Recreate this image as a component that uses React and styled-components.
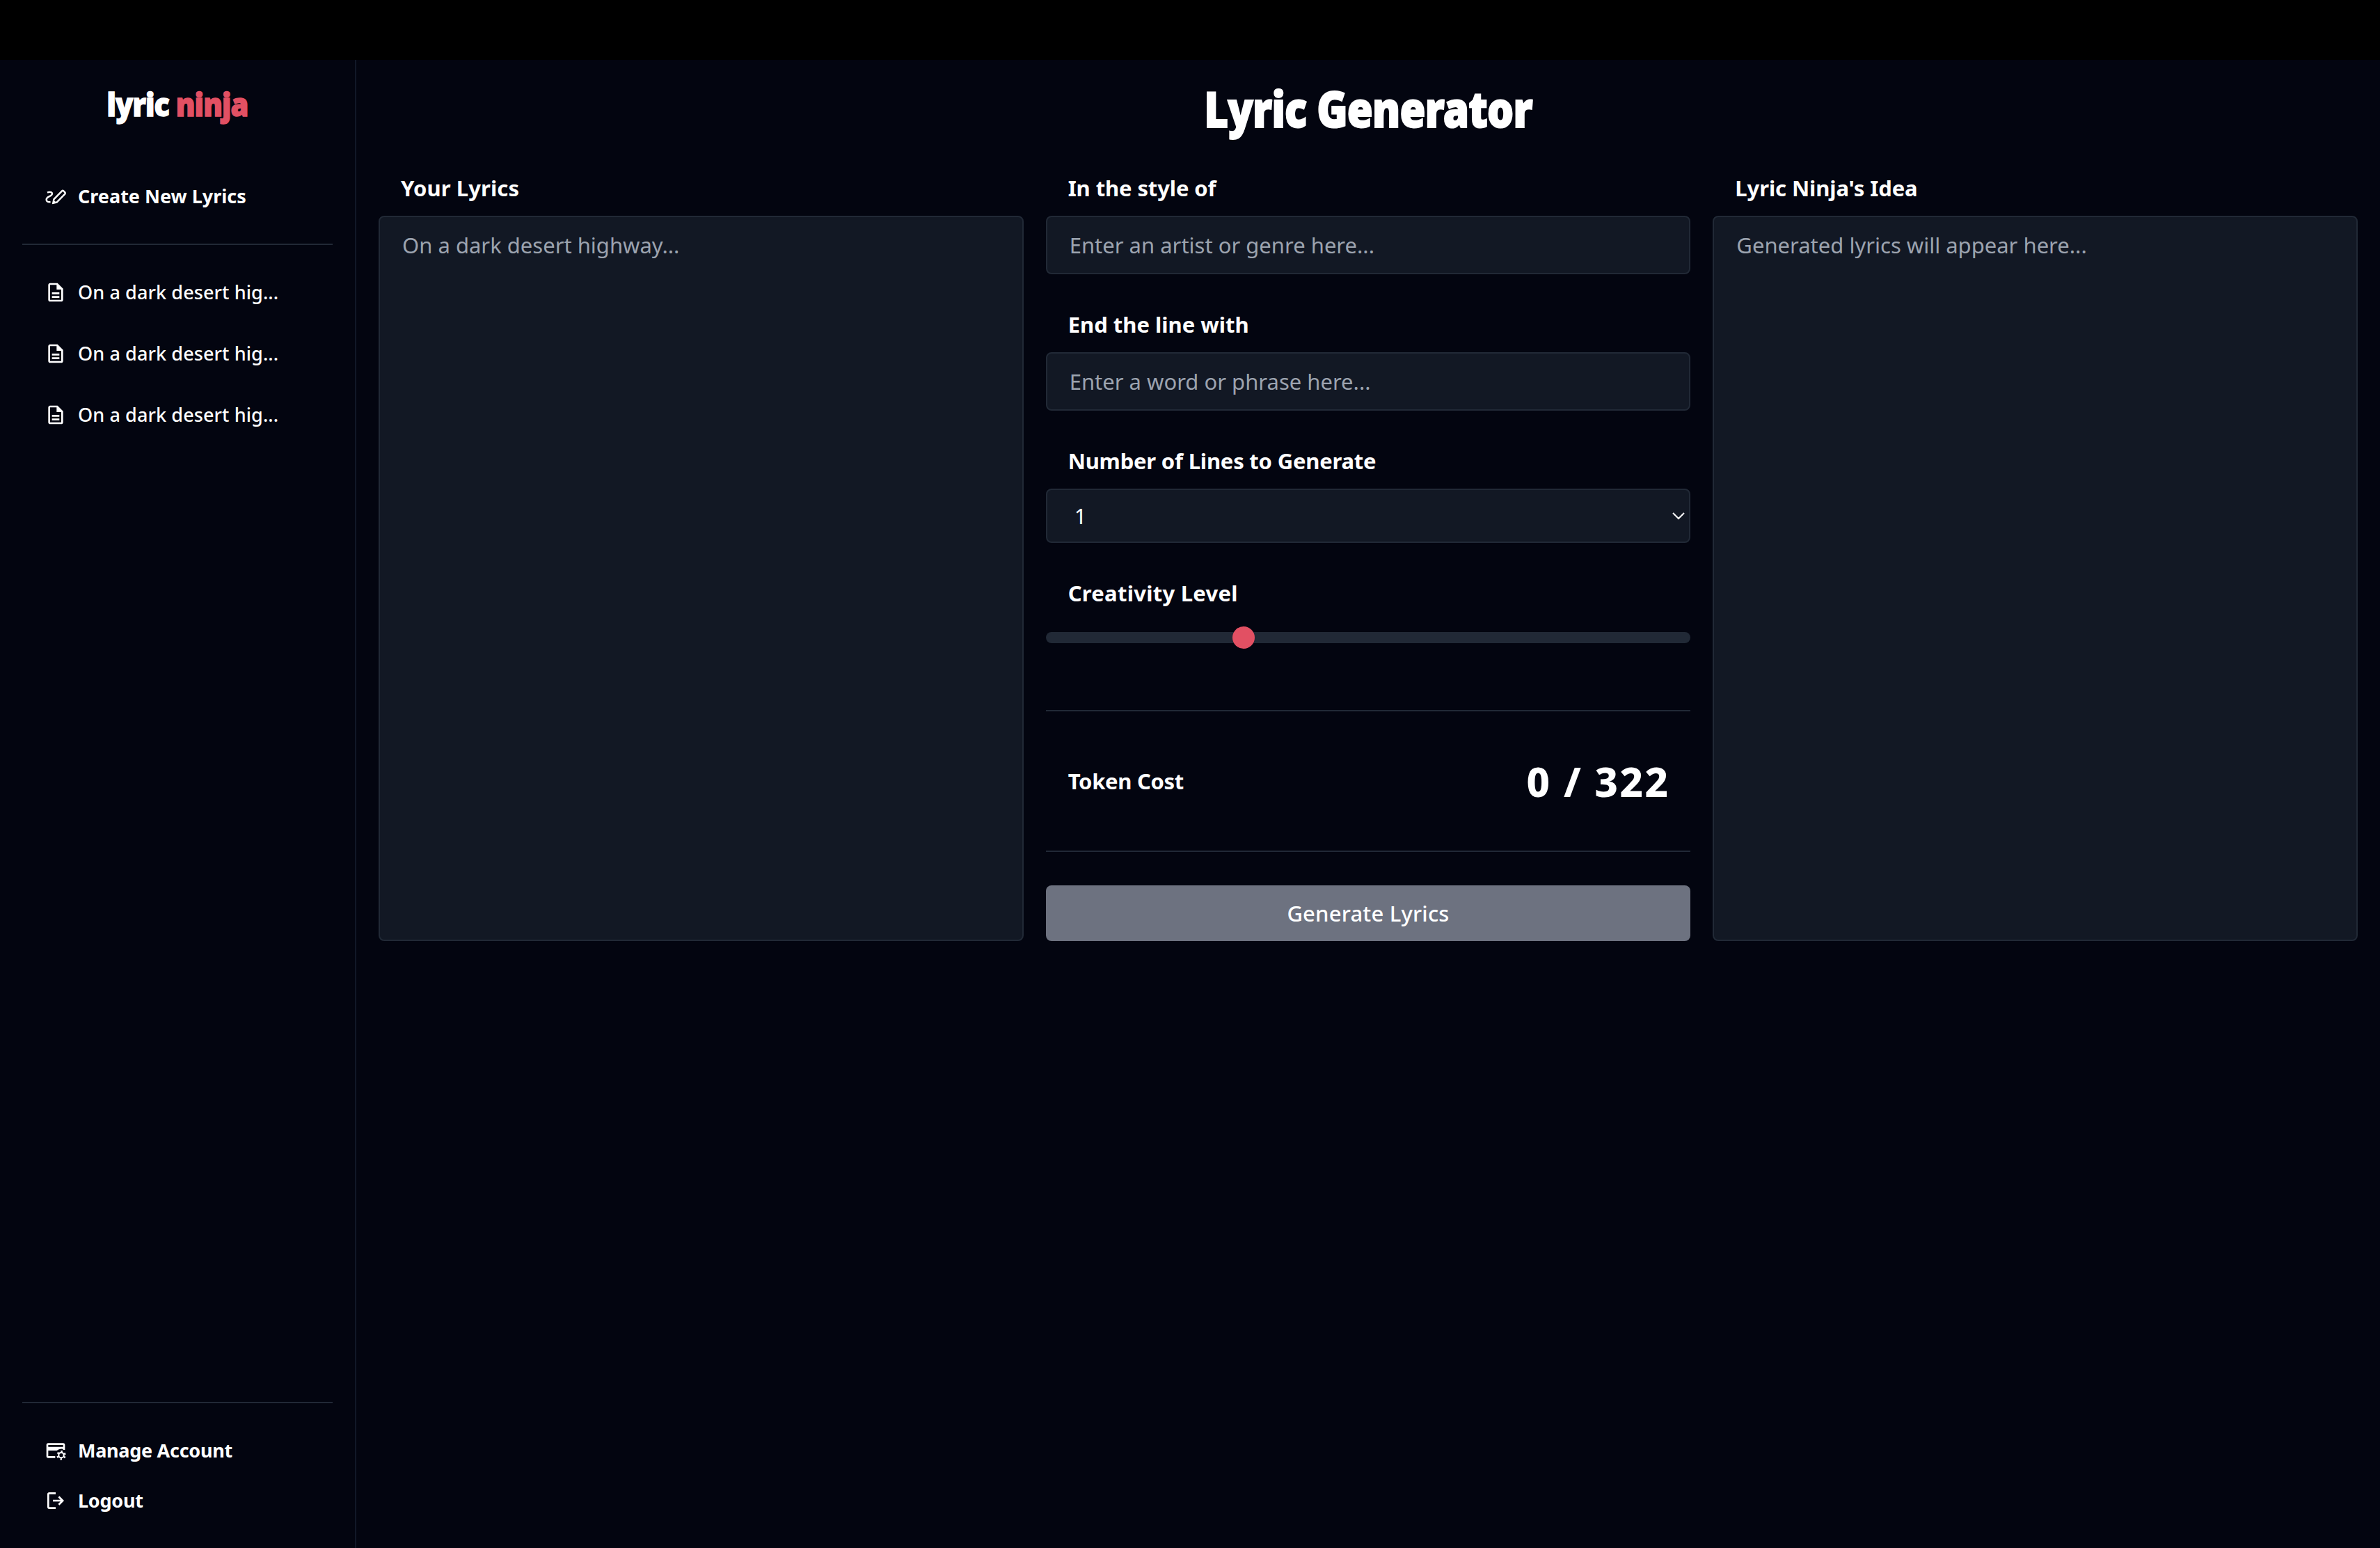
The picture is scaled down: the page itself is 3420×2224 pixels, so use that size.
import React from "react";
import styled, { createGlobalStyle } from "styled-components";
import { MdOutlineDescription } from "react-icons/md";

const GlobalStyle = createGlobalStyle`
  * {
    box-sizing: border-box;
  }
  body {
    margin: 0;
    background: #030510;
    color: #ffffff;
    font-family: "Noto Sans", "Open Sans", sans-serif;
  }
`;

const Page = styled.div`
  display: flex;
  flex-direction: column;
  width: 100vw;
  height: 100vh;
  overflow: hidden;
`;

const TopStrip = styled.div`
  flex: none;
  height: 86px;
  background: #000000;
`;

const Layout = styled.div`
  flex: 1;
  display: flex;
  min-height: 0;
`;

const Sidebar = styled.aside`
  display: flex;
  flex-direction: column;
  width: 512px;
  padding: 0 32px 48px;
  border-right: 2px solid #111827;
`;

const Logo = styled.div`
  height: 128px;
  line-height: 126px;
  text-align: center;
  font-size: 46px;
  font-weight: 900;
  letter-spacing: -1px;
  transform: scaleX(0.9);
  -webkit-text-stroke: 1.5px currentColor;
`;

const Pink = styled.span`
  color: #e25063;
`;

const Nav = styled.nav`
  display: flex;
  flex-direction: column;
  padding: ${(props) => props.$pad};
  gap: ${(props) => props.$gap};
  border-bottom: ${(props) => (props.$line ? "2px solid #212936" : "none")};
`;

const NavItem = styled.a`
  display: flex;
  align-items: center;
  gap: 16px;
  height: 40px;
  padding-left: 32px;
  font-size: 27px;
  line-height: 40px;
  font-weight: ${(props) => props.$weight};
  letter-spacing: ${(props) => props.$spacing || "0"};
  white-space: nowrap;

  svg {
    flex: none;
    width: 32px;
    height: 32px;
  }
`;

const BottomLine = styled.div`
  height: 2px;
  margin-top: auto;
  background: #212936;
`;

const Main = styled.main`
  flex: 1;
  padding: 0 32px;
`;

const Title = styled.h1`
  margin: 0;
  height: 144px;
  line-height: 139px;
  text-align: center;
  font-size: 71px;
  font-weight: 900;
  letter-spacing: -1px;
  transform: scaleX(0.845);
  -webkit-text-stroke: 2px currentColor;
`;

const Columns = styled.div`
  display: grid;
  grid-template-columns: repeat(3, 1fr);
  gap: 32px;
  height: 1122px;
`;

const Column = styled.section`
  display: flex;
  flex-direction: column;
  min-width: 0;
`;

const Label = styled.label`
  flex: none;
  height: 80px;
  padding: 0 32px;
  line-height: 80px;
  font-size: 31px;
  font-weight: 700;
  letter-spacing: ${(props) => props.$spacing || "0"};
`;

const TextArea = styled.div`
  flex: 1;
  padding: 16px 32px;
  border: 2px solid #212936;
  border-radius: 8px;
  background: #121824;
  color: #9ca3af;
  font-size: 31px;
  line-height: 48px;
`;

const Field = styled(TextArea)`
  flex: none;
  height: 84px;
  margin-bottom: 32px;
`;

const Select = styled.div`
  display: flex;
  align-items: center;
  justify-content: space-between;
  height: 78px;
  margin-bottom: 32px;
  padding: 0 6px 0 39px;
  border: 2px solid #212936;
  border-radius: 8px;
  background: #121824;
  font-size: 31px;
`;

const Slider = styled.div`
  display: flex;
  align-items: center;
  height: 16px;
  margin: 16px 0 96px;
  padding-left: 268px;
  border-radius: 8px;
  background: #212936;
`;

const Thumb = styled.div`
  width: 32px;
  height: 32px;
  border-radius: 50%;
  background: #e25063;
`;

const TokenRow = styled.div`
  display: flex;
  align-items: center;
  justify-content: space-between;
  height: 204px;
  padding: 0 32px;
  border-top: 2px solid #212936;
  border-bottom: 2px solid #212936;
`;

const TokenLabel = styled.span`
  font-size: 31px;
  font-weight: 700;
  letter-spacing: -0.3px;
`;

const TokenCount = styled.span`
  margin-right: -2px;
  font-size: 58px;
  font-weight: 800;
  letter-spacing: 2.4px;
`;

const GenerateButton = styled.div`
  height: 80px;
  margin-top: auto;
  border-radius: 8px;
  background: #6d7280;
  text-align: center;
  font-size: 31px;
  line-height: 80px;
  font-weight: 500;
  letter-spacing: 0.2px;
`;

const DrawIcon = () => (
  <svg viewBox="0 0 24 24" fill="none" stroke="currentColor" strokeWidth="1.8">
    <path d="M3 8Q5 7 7 7.600Q9 8.600 7.800 10.300Q6.800 11.500 4.600 12.400Q1.800 13.600 2 16Q2.400 18.400 6.400 18.200" />
    <path d="M9.300 19.200L10 15.300L18.800 6.300Q19.600 5.500 20.500 6.300L22 7.800Q22.700 8.600 22 9.500L13.200 18.400Z" />
    <path d="M8.500 20L9.400 15.600L13 19.200Z" fill="currentColor" stroke="none" />
  </svg>
);

const CardGearIcon = () => (
  <svg viewBox="0 0 24 24" fill="none" stroke="currentColor">
    <path d="M11.500 19H4Q3 19 3 18V6Q3 5 4 5H20Q21 5 21 6V11.300" strokeWidth="2" />
    <path d="M3 8H21V10.600Q16.500 9 13.200 12H3Z" fill="currentColor" stroke="none" />
    <circle cx="18" cy="17" r="2.800" strokeWidth="1.600" />
    <circle
      cx="18"
      cy="17"
      r="4.200"
      strokeWidth="1.700"
      strokeDasharray="1.9 2.498"
      transform="rotate(17 18 17)"
    />
  </svg>
);

const LogoutIcon = () => (
  <svg viewBox="0 0 24 24" fill="currentColor">
    <path d="M5 21q-.825 0-1.412-.587Q3 19.825 3 19V5q0-.825.588-1.413Q4.175 3 5 3h7v2H5v14h7v2Zm11-4-1.375-1.450 2.550-2.550H9v-2h8.175l-2.550-2.550L16 7l5 5Z" />
  </svg>
);

const Chevron = () => (
  <svg width="18" height="18" viewBox="0 0 18 18" fill="none" stroke="#ffffff" strokeWidth="2">
    <path d="M1 5L9 13L17 5" />
  </svg>
);

const App = () => {
  const savedLyrics = [1, 2, 3];

  return (
    <Page>
      <GlobalStyle />
      <TopStrip />
      <Layout>
        <Sidebar>
          <Logo>
            lyric <Pink>ninja</Pink>
          </Logo>
          <Nav $pad="48px 0 48px" $gap="0" $line>
            <NavItem $weight="700">
              <DrawIcon />
              Create New Lyrics
            </NavItem>
          </Nav>
          <Nav $pad="48px 0" $gap="48px">
            {savedLyrics.map((id) => (
              <NavItem key={id} $weight="500" $spacing="0.1px">
                <MdOutlineDescription />
                On a dark desert hig...
              </NavItem>
            ))}
          </Nav>
          <BottomLine />
          <Nav $pad="48px 0 0" $gap="32px">
            <NavItem $weight="700" $spacing="-0.28px">
              <CardGearIcon />
              Manage Account
            </NavItem>
            <NavItem $weight="700" $spacing="-0.25px">
              <LogoutIcon />
              Logout
            </NavItem>
          </Nav>
        </Sidebar>
        <Main>
          <Title>Lyric Generator</Title>
          <Columns>
            <Column>
              <Label $spacing="0.1px">Your Lyrics</Label>
              <TextArea>On a dark desert highway...</TextArea>
            </Column>
            <Column>
              <Label $spacing="-0.1px">In the style of</Label>
              <Field>Enter an artist or genre here...</Field>
              <Label>End the line with</Label>
              <Field>Enter a word or phrase here...</Field>
              <Label $spacing="-0.2px">Number of Lines to Generate</Label>
              <Select>
                1
                <Chevron />
              </Select>
              <Label $spacing="0.27px">Creativity Level</Label>
              <Slider>
                <Thumb />
              </Slider>
              <TokenRow>
                <TokenLabel>Token Cost</TokenLabel>
                <TokenCount>0 / 322</TokenCount>
              </TokenRow>
              <GenerateButton>Generate Lyrics</GenerateButton>
            </Column>
            <Column>
              <Label $spacing="-0.1px">Lyric Ninja's Idea</Label>
              <TextArea>Generated lyrics will appear here...</TextArea>
            </Column>
          </Columns>
        </Main>
      </Layout>
    </Page>
  );
};

export default App;
